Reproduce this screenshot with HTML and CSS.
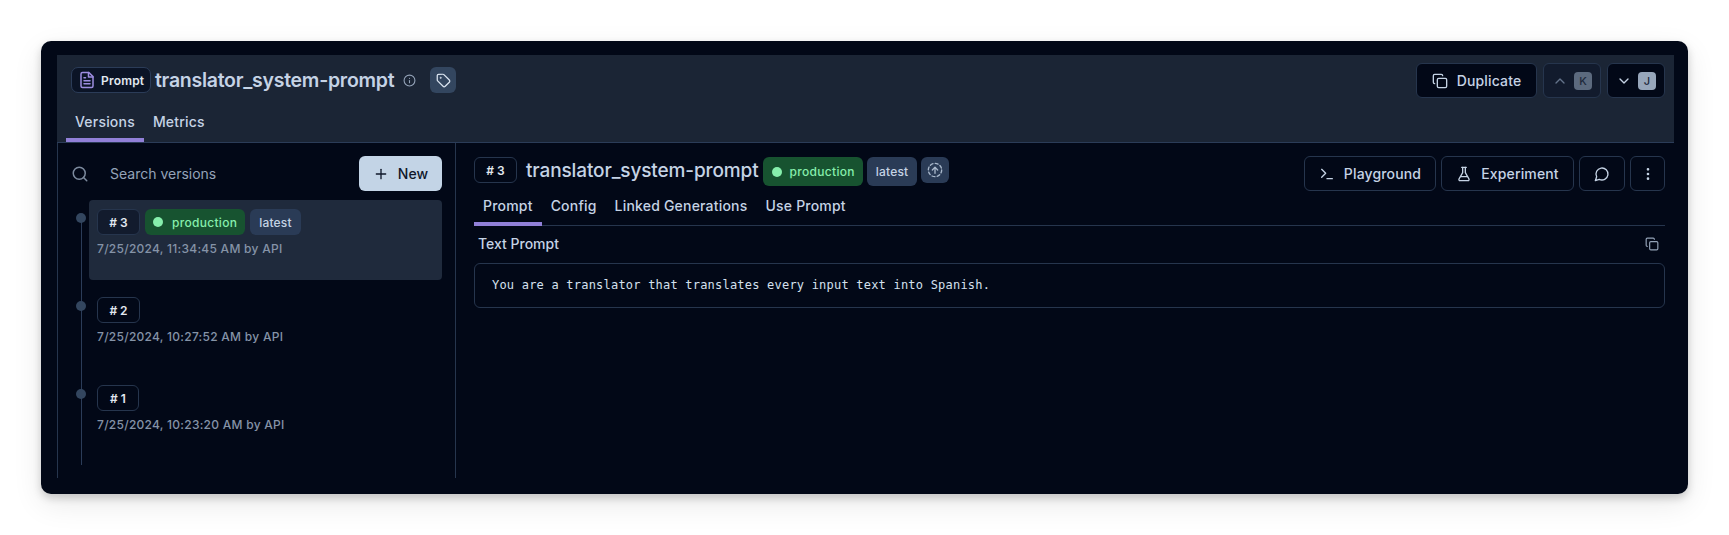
FILE: index.html
```html
<!DOCTYPE html>
<html lang="en">
<head>
    <meta charset="UTF-8">
    <title>translator_system-prompt</title>
    <link rel="stylesheet" href="styles.css">
</head>
<body>
    <div class="window">
        <header class="page-header">
            <div class="title-row">
                <span class="type-badge">
                    <svg class="type-icon" viewBox="0 0 24 24" fill="none" stroke="currentColor" stroke-width="2" stroke-linecap="round" stroke-linejoin="round"><path d="M14.5 2H6a2 2 0 0 0-2 2v16a2 2 0 0 0 2 2h12a2 2 0 0 0 2-2V7.5z"/><path d="M14 2v6h6"/><path d="M16 13H8"/><path d="M16 17H8"/><path d="M10 9H8"/></svg>
                    Prompt
                </span>
                <h1 class="page-title">translator_system-prompt</h1>
                <svg class="info-icon" viewBox="0 0 24 24" fill="none" stroke="currentColor" stroke-width="2" stroke-linecap="round"><circle cx="12" cy="12" r="10"/><path d="M12 16v-4"/><path d="M12 8h.01"/></svg>
                <span class="tag-btn">
                    <svg viewBox="0 0 24 24" fill="none" stroke="currentColor" stroke-width="2" stroke-linecap="round" stroke-linejoin="round"><path d="M12.6 2.6A2 2 0 0 0 11.2 2H4a2 2 0 0 0-2 2v7.2a2 2 0 0 0 .6 1.4l8.7 8.7a2.4 2.4 0 0 0 3.4 0l6.6-6.6a2.4 2.4 0 0 0 0-3.4z"/><circle cx="7.5" cy="7.5" r=".5" fill="currentColor"/></svg>
                </span>
                <div class="header-actions">
                    <span class="btn btn-duplicate">
                        <svg class="btn-icon" viewBox="0 0 24 24" fill="none" stroke="currentColor" stroke-width="2" stroke-linecap="round" stroke-linejoin="round"><rect x="8" y="8" width="14" height="14" rx="2"/><path d="M4 16c-1.1 0-2-.9-2-2V4c0-1.1.9-2 2-2h10c1.1 0 2 .9 2 2"/></svg>
                        Duplicate
                    </span>
                    <span class="btn btn-nav btn-disabled">
                        <svg class="chev" viewBox="0 0 24 24" fill="none" stroke="currentColor" stroke-width="2" stroke-linecap="round" stroke-linejoin="round"><path d="m18 15-6-6-6 6"/></svg>
                        <kbd class="key">K</kbd>
                    </span>
                    <span class="btn btn-nav">
                        <svg class="chev" viewBox="0 0 24 24" fill="none" stroke="currentColor" stroke-width="2" stroke-linecap="round" stroke-linejoin="round"><path d="m6 9 6 6 6-6"/></svg>
                        <kbd class="key">J</kbd>
                    </span>
                </div>
            </div>
            <nav class="tabs header-tabs">
                <span class="tab tab-active">Versions</span>
                <span class="tab">Metrics</span>
            </nav>
        </header>

        <div class="panes">
            <aside class="sidebar">
                <div class="search-row">
                    <svg class="search-icon" viewBox="0 0 24 24" fill="none" stroke="currentColor" stroke-width="2" stroke-linecap="round" stroke-linejoin="round"><circle cx="11" cy="11" r="8"/><path d="m21 21-4.3-4.3"/></svg>
                    <span class="search-text">Search versions</span>
                    <span class="btn btn-new">
                        <svg class="btn-icon" viewBox="0 0 24 24" fill="none" stroke="currentColor" stroke-width="2" stroke-linecap="round"><path d="M5 12h14"/><path d="M12 5v14"/></svg>
                        New
                    </span>
                </div>
                <div class="timeline">
                    <div class="version version-active">
                        <div class="version-badges">
                            <span class="num-badge num-dim"># 3</span>
                            <span class="label label-prod"><i class="dot"></i>production</span>
                            <span class="label">latest</span>
                        </div>
                        <div class="version-date">7/25/2024, 11:34:45 AM by API</div>
                    </div>
                    <div class="version">
                        <div class="version-badges"><span class="num-badge"># 2</span></div>
                        <div class="version-date">7/25/2024, 10:27:52 AM by API</div>
                    </div>
                    <div class="version">
                        <div class="version-badges"><span class="num-badge num-narrow"># 1</span></div>
                        <div class="version-date">7/25/2024, 10:23:20 AM by API</div>
                    </div>
                </div>
            </aside>

            <main class="detail">
                <div class="detail-head">
                    <span class="num-badge"># 3</span>
                    <h2 class="detail-title">translator_system-prompt</h2>
                    <span class="label label-prod label-big"><i class="dot"></i>production</span>
                    <span class="label label-big">latest</span>
                    <span class="label label-icon">
                        <svg viewBox="0 0 24 24" fill="none" stroke="currentColor" stroke-width="2" stroke-linecap="round" stroke-linejoin="round"><circle cx="12" cy="12" r="10" stroke-dasharray="4.5 3.35"/><path d="M12 17V8"/><path d="m8 12 4-4 4 4"/></svg>
                    </span>
                    <div class="detail-actions">
                        <span class="btn">
                            <svg class="btn-icon" viewBox="0 0 24 24" fill="none" stroke="currentColor" stroke-width="2" stroke-linecap="round" stroke-linejoin="round"><path d="m4 17 6-6-6-6"/><path d="M12 19h8"/></svg>
                            Playground
                        </span>
                        <span class="btn">
                            <svg class="btn-icon" viewBox="0 0 24 24" fill="none" stroke="currentColor" stroke-width="2" stroke-linecap="round" stroke-linejoin="round"><path d="M10 2v7.5a2 2 0 0 1-.2.9L4.5 19.5A1.8 1.8 0 0 0 6 22h12a1.8 1.8 0 0 0 1.5-2.5l-5.3-9.1a2 2 0 0 1-.2-.9V2"/><path d="M8.5 2h7"/><path d="M7 16h10"/></svg>
                            Experiment
                        </span>
                        <span class="btn btn-comment">
                            <svg class="btn-icon" viewBox="0 0 24 24" fill="none" stroke="currentColor" stroke-width="2" stroke-linecap="round" stroke-linejoin="round"><path d="M7.9 20A9 9 0 1 0 4 16.1L2 22z"/></svg>
                        </span>
                        <span class="btn btn-more">
                            <svg class="btn-icon" viewBox="0 0 24 24" fill="none" stroke="currentColor" stroke-width="2" stroke-linecap="round" stroke-linejoin="round"><circle cx="12" cy="12" r="1"/><circle cx="12" cy="5" r="1"/><circle cx="12" cy="19" r="1"/></svg>
                        </span>
                    </div>
                </div>
                <nav class="tabs detail-tabs">
                    <span class="tab tab-active">Prompt</span>
                    <span class="tab">Config</span>
                    <span class="tab">Linked Generations</span>
                    <span class="tab">Use Prompt</span>
                </nav>
                <div class="prompt-head">
                    <span class="prompt-label">Text Prompt</span>
                    <svg class="copy-icon" viewBox="0 0 24 24" fill="none" stroke="currentColor" stroke-width="2" stroke-linecap="round" stroke-linejoin="round"><rect x="8" y="8" width="14" height="14" rx="2"/><path d="M4 16c-1.1 0-2-.9-2-2V4c0-1.1.9-2 2-2h10c1.1 0 2 .9 2 2"/></svg>
                </div>
                <div class="prompt-box">You are a translator that translates every input text into Spanish.</div>
            </main>
        </div>
    </div>
</body>
</html>
```

FILE: styles.css
```css
* { box-sizing: border-box; }
body { margin: 0; padding: 41px; height: 535px; overflow: hidden; background: #fff; font-family: Inter, "Liberation Sans", sans-serif; color: #d5e0ee; }
h1, h2 { margin: 0; }
svg { display: block; }

.window { width: 1647px; height: 453px; padding: 14px 14px 16px 16px; background: #020817; border-radius: 10px; box-shadow: 0 4px 8px rgba(0, 0, 0, 0.18), 0 10px 30px rgba(0, 0, 0, 0.09); display: flex; flex-direction: column; }

/* header */
.page-header { height: 88px; padding: 8px 9px 0 14px; background: #1b2535; border-bottom: 1px solid #2b3c58; flex: none; }
.title-row { display: flex; align-items: flex-start; height: 50px; padding-top: 4px; }
.type-badge { display: flex; align-items: center; gap: 5px; width: 80px; height: 26px; padding-left: 6px; background: #0b1426; border: 1px solid #2b3c58; border-radius: 7px; font-size: 12px; font-weight: 600; letter-spacing: 0.2px; color: #e2e8f0; flex: none; }
.type-icon { width: 18px; height: 18px; color: #9d8de0; flex: none; }
.page-title { margin-left: 4px; font-size: 19.5px; line-height: 26px; font-weight: 600; color: #c5d3e5; white-space: nowrap; letter-spacing: -0.27px; }
.info-icon { width: 13px; height: 13px; margin: 7px 0 0 9px; color: #94a3b8; }
.tag-btn { width: 26px; height: 26px; margin-left: 14px; display: flex; align-items: center; justify-content: center; background: #33465f; border-radius: 6px; color: #dbe5f1; }
.tag-btn svg { width: 15px; height: 15px; }
.header-actions { margin-left: auto; margin-top: -4px; display: flex; gap: 6px; }

/* buttons */
.btn { height: 35px; display: flex; align-items: center; justify-content: center; gap: 9px; background: #020817; border: 1px solid #26354d; border-radius: 6px; font-size: 14px; font-weight: 500; letter-spacing: 0.15px; color: #c5d3e5; white-space: nowrap; flex: none; }
.btn-icon { width: 16px; height: 16px; flex: none; }
.btn-duplicate { width: 121px; }
.btn-nav { width: 58px; gap: 6px; }
.btn-disabled { background: #121b2d; color: #64748b; }
.chev { width: 16px; height: 16px; }
.key { width: 18px; height: 18px; display: flex; align-items: center; justify-content: center; background: #97a6ba; border-radius: 4px; font-family: Inter, sans-serif; font-size: 11px; font-weight: 500; color: #1e293b; }
.btn-disabled .key { background: #5c6a7e; }
.btn-new { width: 83px; background: #c3d4e6; border: 0; color: #0f172a; }

/* tabs */
.tabs { display: flex; }
.tab { height: 100%; padding: 0 8px; font-size: 14px; font-weight: 500; letter-spacing: 0.2px; color: #c5d3e5; border-bottom: 4px solid transparent; white-space: nowrap; }
.tab-active { border-bottom-color: #9180d8; }
.header-tabs { height: 29px; margin-left: -5px; }
.header-tabs .tab { line-height: 17px; padding: 0 9px; }
.detail-tabs { height: 30px; margin-top: 4px; border-bottom: 1px solid #26354d; }
.detail-tabs .tab { height: 30px; line-height: 19px; margin-bottom: -1px; padding: 0 9px; }

/* panes */
.panes { flex: 1; display: flex; min-height: 0; }
.sidebar { width: 399px; height: 100%; padding: 13px 13px 0 0; border-left: 1px solid #26354d; border-right: 1px solid #26354d; flex: none; }
.search-row { display: flex; align-items: center; height: 35px; padding-left: 13px; }
.search-icon { width: 18px; height: 18px; color: #7c8a9e; flex: none; }
.search-text { margin-left: 21px; font-size: 14px; color: #94a3b8; }
.btn-new { margin-left: auto; }

.timeline { position: relative; margin-top: 9px; }
.timeline::before { content: ""; position: absolute; left: 23px; top: 17px; bottom: -1px; width: 1px; background: #2b3c58; }
.version { position: relative; height: 88px; margin-left: 31px; padding: 9px 8px; }
.version::before { content: ""; position: absolute; left: -13px; top: 13px; width: 10px; height: 10px; border-radius: 50%; background: #33465f; }
.version-active { height: 80px; margin-bottom: 8px; background: #1f2a3c; border-radius: 4px; }
.version-badges { display: flex; gap: 5px; }
.version-date { margin-top: 6px; font-size: 12px; line-height: 16px; font-weight: 500; color: #8593a7; white-space: nowrap; letter-spacing: 0.27px; }

.num-badge { width: 43px; height: 26px; display: flex; align-items: center; justify-content: center; border: 1px solid #26354d; border-radius: 6px; font-size: 12px; font-weight: 600; color: #e2e8f0; flex: none; }
.num-dim { background: #121b2d; }
.num-narrow { width: 42px; }
.label { height: 26px; padding: 0 9px; display: flex; align-items: center; background: #2a3b56; border-radius: 6px; font-size: 12px; font-weight: 500; letter-spacing: 0.2px; color: #c5d3e5; flex: none; }
.label-prod { gap: 9px; padding: 0 8px; background: #175330; color: #86efac; letter-spacing: 0.3px; }
.dot { width: 10px; height: 10px; border-radius: 50%; background: #86efac; }
.label-big { height: 29px; padding: 0 9px; }
.label-big.label-prod { padding: 0 8px 0 9px; gap: 8px; }
.label-icon { width: 28px; height: 26px; padding: 0; justify-content: center; color: #a9b8cb; }
.label-icon svg { width: 16px; height: 16px; }

/* detail */
.detail { flex: 1; min-width: 0; padding: 14px 9px 0 18px; }
.detail-head { display: flex; align-items: flex-start; gap: 4px; height: 35px; }
.detail-head .num-badge { margin-right: 5px; }
.detail-title { font-size: 19px; line-height: 28px; font-weight: 500; color: #c5d3e5; white-space: nowrap; letter-spacing: -0.12px; }
.detail-actions { margin-left: auto; margin-top: -1px; display: flex; gap: 5px; }
.detail-actions .btn:nth-child(1) { width: 132px; }
.detail-actions .btn:nth-child(2) { width: 133px; }
.btn-comment { width: 46px; }
.btn-more { width: 35px; }
.prompt-head { display: flex; align-items: center; justify-content: space-between; height: 37px; padding: 0 6px 2px 4px; }
.prompt-label { font-size: 14px; font-weight: 500; color: #c5d3e5; }
.copy-icon { width: 14px; height: 14px; color: #94a3b8; }
.prompt-box { height: 45px; padding: 0 17px 2px; display: flex; align-items: center; border: 1px solid #26354d; border-radius: 6px; font-family: "DejaVu Sans Mono", monospace; font-size: 12px; letter-spacing: 0.21px; color: #d5e0ee; white-space: pre; }
```
